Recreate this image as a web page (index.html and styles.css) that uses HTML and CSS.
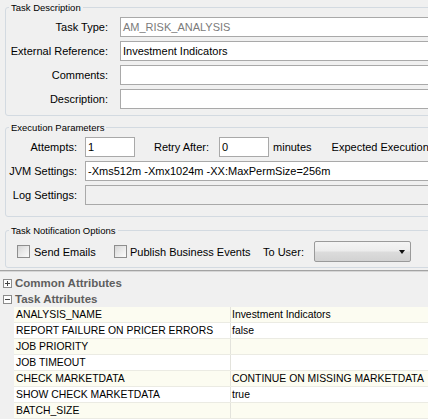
FILE: index.html
```html
<!DOCTYPE html>
<html>
<head>
<meta charset="utf-8">
<link rel="stylesheet" href="styles.css">
</head>
<body>
<fieldset class="group g1">
  <legend>Task Description</legend>
  <div class="form form-desc">
    <label>Task Type:</label>
    <div class="field muted">AM_RISK_ANALYSIS</div>
    <label>External Reference:</label>
    <div class="field">Investment Indicators</div>
    <label>Comments:</label>
    <div class="field"></div>
    <label>Description:</label>
    <div class="field"></div>
  </div>
</fieldset>

<fieldset class="group g2">
  <legend>Execution Parameters</legend>
  <div class="form form-exec">
    <label>Attempts:</label>
    <div class="inline">
      <div class="field small">1</div>
      <span class="retry">Retry After:</span>
      <div class="field small">0</div>
      <span class="minutes">minutes</span>
      <span class="expected">Expected Execution</span>
    </div>
    <label>JVM Settings:</label>
    <div class="field">-Xms512m -Xmx1024m -XX:MaxPermSize=256m</div>
    <label>Log Settings:</label>
    <div class="field disabled"></div>
  </div>
</fieldset>

<fieldset class="group g3">
  <legend>Task Notification Options</legend>
  <div class="notify">
    <div class="opt opt-send"><span class="box"></span><span>Send Emails</span></div>
    <div class="opt opt-pub"><span class="box"></span><span>Publish Business Events</span></div>
    <span class="touser">To User:</span>
    <div class="select"><span class="arrow"></span></div>
  </div>
</fieldset>

<div class="sep"></div>

<div class="heads">
  <div class="head">
    <svg class="tog" width="9" height="9" viewBox="0 0 9 9"><rect x="0.5" y="0.5" width="8" height="8" fill="#fdfdfd" stroke="#8c8c8c"/><path d="M2 4.5h5M4.5 2v5" stroke="#444" stroke-width="1"/></svg>
    <span>Common Attributes</span>
  </div>
  <div class="head">
    <svg class="tog" width="9" height="9" viewBox="0 0 9 9"><rect x="0.5" y="0.5" width="8" height="8" fill="#fdfdfd" stroke="#8c8c8c"/><path d="M2 4.5h5" stroke="#444" stroke-width="1"/></svg>
    <span>Task Attributes</span>
  </div>
</div>

<div class="attrs">
  <div class="row"><div class="c1">ANALYSIS_NAME</div><div class="c2">Investment Indicators</div></div>
  <div class="row"><div class="c1">REPORT FAILURE ON PRICER ERRORS</div><div class="c2">false</div></div>
  <div class="row"><div class="c1">JOB PRIORITY</div><div class="c2"></div></div>
  <div class="row"><div class="c1">JOB TIMEOUT</div><div class="c2"></div></div>
  <div class="row"><div class="c1">CHECK MARKETDATA</div><div class="c2">CONTINUE ON MISSING MARKETDATA</div></div>
  <div class="row"><div class="c1">SHOW CHECK MARKETDATA</div><div class="c2">true</div></div>
  <div class="row"><div class="c1">BATCH_SIZE</div><div class="c2"></div></div>
</div>
</body>
</html>
```

FILE: styles.css
```css
html, body {
  margin: 0;
  padding: 0;
}
body {
  background: #f0f0f0;
  font-family: "Liberation Sans", Arial, sans-serif;
  font-size: 11px;
  color: #000;
  width: 428px;
  height: 419px;
  overflow: hidden;
}

.group {
  margin: 0 0 0 5px;
  padding: 4px 0 6px 3px;
  border: 1px solid #d3dae1;
  border-radius: 3px;
  width: 450px;
  box-sizing: border-box;
  min-width: 0;
}
.group legend {
  font-size: 9.5px;
  line-height: 11px;
  padding: 0 2px;
  color: #000;
}
.g1 { margin-top: 2px; }
.g2 { margin-top: 6px; padding-bottom: 11px; }
.g3 { margin-top: 8px; padding-top: 5px; padding-bottom: 5px; }

.form {
  display: grid;
  row-gap: 4px;
}
.form label {
  text-align: right;
  align-self: center;
  white-space: nowrap;
}
.form-desc {
  grid-template-columns: 99px 1fr;
  column-gap: 12px;
}
.form-exec {
  grid-template-columns: 68px 1fr;
  column-gap: 8px;
}

.field {
  height: 20px;
  box-sizing: border-box;
  border: 1px solid #a9a9a9;
  background: #fff;
  padding: 0 2px;
  line-height: 18px;
  white-space: nowrap;
  overflow: hidden;
}
.field.muted { color: #7b7b7b; }
.field.disabled { background: #f0f0f0; }
.field.small { width: 50px; flex: none; }

.inline {
  display: flex;
  align-items: center;
  white-space: nowrap;
}
.retry { margin-left: 19px; margin-right: 10px; }
.minutes { margin-left: 4px; }
.expected { margin-left: 20px; }

.notify {
  display: flex;
  align-items: center;
  height: 21px;
  white-space: nowrap;
}
.opt {
  display: flex;
  align-items: center;
  flex: none;
}
.opt-send { margin-left: 8px; width: 97px; }
.opt-pub { width: 149px; }
.opt .box { margin-right: 4px; }
.opt-pub .box { margin-right: 3px; }
.box {
  display: block;
  width: 13px;
  height: 13px;
  box-sizing: border-box;
  border: 1px solid #8e8e8e;
  background: linear-gradient(135deg, #d6d6d6 0%, #ececec 55%, #fbfbfb 100%);
  flex: none;
}
.touser { width: 51px; flex: none; }
.select {
  width: 97px;
  height: 21px;
  box-sizing: border-box;
  border: 1px solid #9a9a9a;
  border-radius: 2px;
  background: linear-gradient(#f4f4f4 0%, #ececec 48%, #dcdcdc 52%, #d2d2d2 100%);
  display: flex;
  align-items: center;
  justify-content: flex-end;
  padding-right: 5px;
  flex: none;
}
.arrow {
  width: 0;
  height: 0;
  border-left: 3.5px solid transparent;
  border-right: 3.5px solid transparent;
  border-top: 4px solid #111;
  margin-top: 1px;
}

.sep {
  margin-top: 2px;
  height: 1px;
  background: #a3a3a3;
  border-bottom: 1px solid #d6d6d6;
}

.heads { padding-top: 3px; }
.head {
  height: 16px;
  display: flex;
  align-items: center;
  padding-left: 3px;
  font-weight: bold;
  font-size: 11.5px;
  color: #5e5e5e;
  white-space: nowrap;
}
.tog { margin-right: 3px; flex: none; }

.attrs {
  margin-left: 14px;
  font-size: 10.4px;
}
.row {
  display: grid;
  grid-template-columns: 217px 1fr;
  height: 16px;
  box-sizing: border-box;
  border-bottom: 1px solid #ebebe3;
  background: #fff;
}
.row:nth-child(odd) { background: #fcfcf1; }
.c1, .c2 {
  line-height: 15px;
  padding-left: 2px;
  white-space: nowrap;
  overflow: hidden;
}
.c1 { border-right: 1px solid #e3e3dc; }
.c2 { padding-left: 1px; }
```
